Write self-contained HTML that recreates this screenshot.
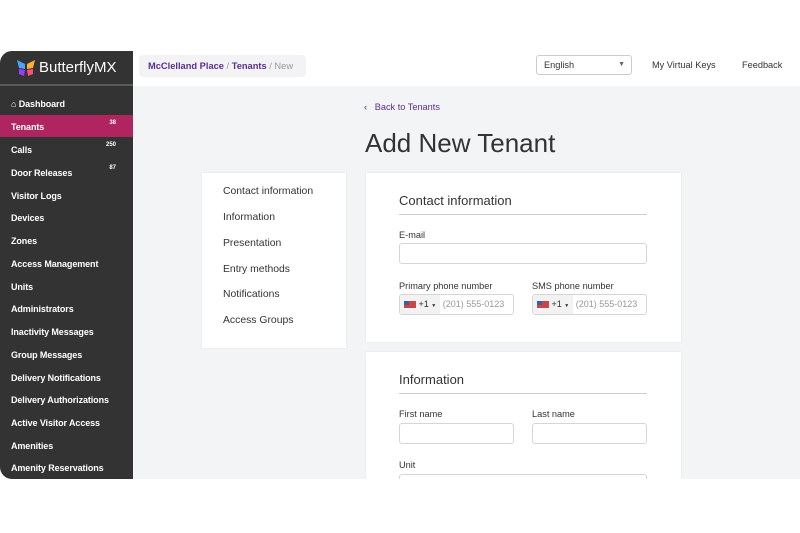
<!DOCTYPE html><html><head><style>
*{box-sizing:border-box;margin:0;padding:0}
body{width:800px;height:533px;background:#fff;font-family:"Liberation Sans",sans-serif;position:relative;overflow:hidden}
.win{position:absolute;left:0;top:51px;width:800px;height:428px;overflow:hidden;border-radius:12px 0 0 12px;background:#f3f4f5}
.side{position:absolute;left:0;top:0;width:133px;height:428px;background:#333}
.logo{height:35px;border-bottom:2px solid #5a5a5a;display:flex;align-items:center;padding-left:16px;color:#fff;font-size:15px}
.side .it{position:absolute;left:11px;color:#fff;font-weight:bold;font-size:9px;white-space:nowrap;letter-spacing:-0.1px}
.side .n{position:absolute;right:17px;color:#fff;font-weight:bold;font-size:6px}
.top{position:absolute;left:133px;top:0;right:0;height:35px;background:#fff}
.bc{position:absolute;left:6px;top:4px;width:167px;height:22px;background:#f3f3f5;border-radius:4px;font-size:9.3px;line-height:22px;padding-left:9px;color:#999;white-space:nowrap}
.bc b{color:#5b2e91}
.sel{position:absolute;left:403px;top:4px;width:96px;height:20px;border:1px solid #ccc;border-radius:3px;font-size:9.2px;line-height:18px;padding-left:7px;color:#333}
.tl{position:absolute;top:9px;font-size:9.2px;color:#333}
.card{position:absolute;background:#fff;box-shadow:0 0 2px rgba(0,0,0,.08)}
.lnav div{position:absolute;left:21px;font-size:10.4px;color:#333}
.h{position:absolute;left:33px;font-size:13px;color:#333}
.hr{position:absolute;left:33px;width:248px;height:1px;background:#ccc}
.lb{position:absolute;font-size:9.2px;color:#333}
.in{position:absolute;height:21px;border:1px solid #d6d6d6;border-radius:3px;background:#fff;white-space:nowrap}
.ph{font-size:9px;color:#999;line-height:19px}
</style></head><body>
<div class="win">
<div class="side">
<div class="logo"><svg width="20" height="18" viewBox="0 0 20 18"><path d="M1 1 L9 5 L9 10 L3 9Z" fill="#4aa3ff"/><path d="M19 1 L11 5 L11 10 L17 9Z" fill="#ffb02e"/><path d="M3 10 L9 11 L8 17 L3 15Z" fill="#9b3cff"/><path d="M17 10 L11 11 L12 17 L17 15Z" fill="#ff4d7d"/></svg><span style="margin-left:3px">ButterflyMX</span></div>
<div class="it" style="top:48px">⌂ Dashboard</div>
<div style="position:absolute;left:0;top:64px;width:133px;height:22px;background:#b0245f"></div>
<div class="it" style="top:71px">Tenants</div><div class="n" style="top:69px">38</div>
<div class="it" style="top:94px">Calls</div><div class="n" style="top:91px">250</div>
<div class="it" style="top:117px">Door Releases</div><div class="n" style="top:114px">87</div>
<div class="it" style="top:140px">Visitor Logs</div>
<div class="it" style="top:162px">Devices</div>
<div class="it" style="top:185px">Zones</div>
<div class="it" style="top:208px">Access Management</div>
<div class="it" style="top:231px">Units</div>
<div class="it" style="top:253px">Administrators</div>
<div class="it" style="top:276px">Inactivity Messages</div>
<div class="it" style="top:299px">Group Messages</div>
<div class="it" style="top:322px">Delivery Notifications</div>
<div class="it" style="top:344px">Delivery Authorizations</div>
<div class="it" style="top:367px">Active Visitor Access</div>
<div class="it" style="top:390px">Amenities</div>
<div class="it" style="top:412px">Amenity Reservations</div>
</div>
<div class="top">
<div class="bc"><b>McClelland Place</b> / <b>Tenants</b> / New</div>
<div class="sel">English<span style="position:absolute;right:6px;color:#666;font-size:7px">▼</span></div>
<div class="tl" style="left:519px">My Virtual Keys</div>
<div class="tl" style="left:609px">Feedback</div>
</div>
<div style="position:absolute;left:364px;top:51px;font-size:9.2px;color:#5b2e91">‹&nbsp;&nbsp; Back to Tenants</div>
<div style="position:absolute;left:365px;top:77px;font-size:26px;color:#333">Add New Tenant</div>
<div class="card lnav" style="left:202px;top:122px;width:144px;height:175px">
<div style="top:13px">Contact information</div><div style="top:39px">Information</div><div style="top:65px">Presentation</div><div style="top:91px">Entry methods</div><div style="top:116px">Notifications</div><div style="top:142px">Access Groups</div>
</div>
<div class="card" style="left:366px;top:122px;width:315px;height:169px">
<div class="h" style="top:20px">Contact information</div><div class="hr" style="top:41px"></div>
<div class="lb" style="left:33px;top:57px">E-mail</div>
<div class="in" style="left:33px;top:70px;width:248px"></div>
<div class="lb" style="left:33px;top:108px">Primary phone number</div>
<div class="lb" style="left:166px;top:108px">SMS phone number</div>
<div class="in ph" style="left:33px;top:121px;width:115px"><span style="display:inline-block;background:#f2f2f2;height:19px;padding:0 4px;color:#333;border-radius:3px 0 0 3px"><span style="display:inline-block;width:12px;height:7px;background:linear-gradient(#c44 0 50%,#fff 50%,#c44 0);vertical-align:middle;position:relative"><span style="position:absolute;left:0;top:0;width:5px;height:4px;background:#3c5ba8"></span></span> +1 <span style="font-size:5px">▼</span></span> (201) 555-0123</div>
<div class="in ph" style="left:166px;top:121px;width:115px"><span style="display:inline-block;background:#f2f2f2;height:19px;padding:0 4px;color:#333;border-radius:3px 0 0 3px"><span style="display:inline-block;width:12px;height:7px;background:linear-gradient(#c44 0 50%,#fff 50%,#c44 0);vertical-align:middle;position:relative"><span style="position:absolute;left:0;top:0;width:5px;height:4px;background:#3c5ba8"></span></span> +1 <span style="font-size:5px">▼</span></span> (201) 555-0123</div>
</div>
<div class="card" style="left:366px;top:301px;width:315px;height:140px">
<div class="h" style="top:20px">Information</div><div class="hr" style="top:41px"></div>
<div class="lb" style="left:33px;top:57px">First name</div>
<div class="lb" style="left:166px;top:57px">Last name</div>
<div class="in" style="left:33px;top:71px;width:115px"></div>
<div class="in" style="left:166px;top:71px;width:115px"></div>
<div class="lb" style="left:33px;top:108px">Unit</div>
<div class="in" style="left:33px;top:122px;width:248px"></div>
</div>
</div>
</body></html>
